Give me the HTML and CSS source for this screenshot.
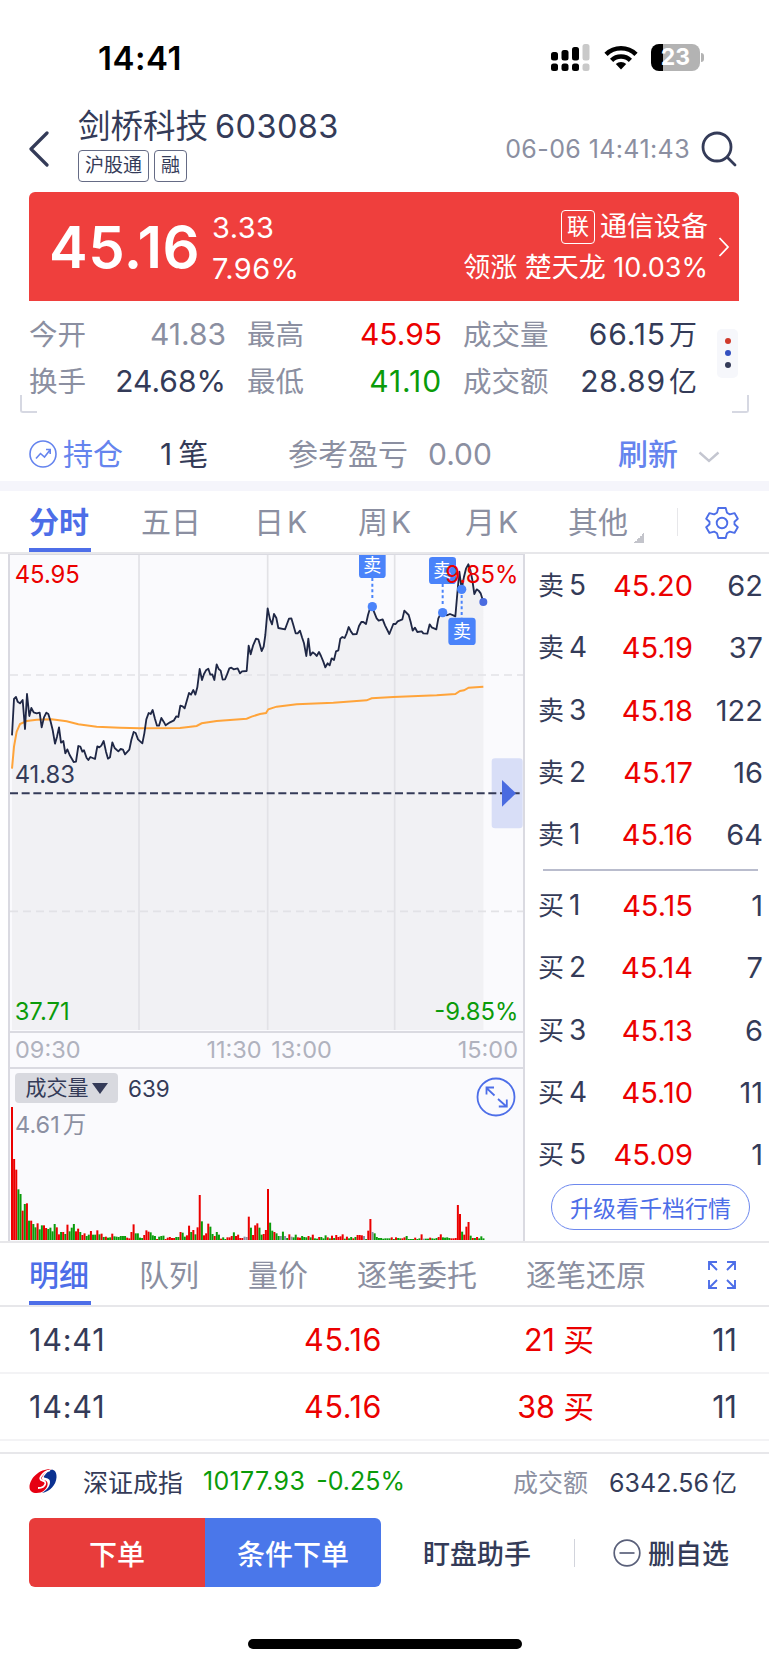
FILE: index.html
```html
<!DOCTYPE html>
<html lang="zh-CN">
<head>
    <meta charset="UTF-8">
    <meta name="viewport" content="width=device-width, initial-scale=1.0">
    <title>剑桥科技 603083</title>
    <link rel="stylesheet" href="styles.css">
</head>
<body>
    <div class="status-bar">
        <div class="status-time">14:41</div>
        <svg class="status-signal" width="39" height="28" viewBox="0 0 39 28">
            <g fill="#000">
                <rect x="0" y="8" width="7" height="8.500" rx="2.500"/>
                <rect x="10.500" y="6" width="7" height="10.500" rx="2.500"/>
                <rect x="21" y="3" width="7" height="13.500" rx="2.500"/>
                <rect x="0" y="19.500" width="7" height="7.500" rx="2.500"/>
                <rect x="10.500" y="19.500" width="7" height="7.500" rx="2.500"/>
                <rect x="21" y="19.500" width="7" height="7.500" rx="2.500"/>
            </g>
            <g fill="#c9c9c9">
                <rect x="31.500" y="0" width="7" height="16.500" rx="2.500"/>
                <rect x="31.500" y="19.500" width="7" height="7.500" rx="2.500"/>
            </g>
        </svg>
        <svg class="status-wifi" width="34" height="25" viewBox="0 0 34 25">
            <g fill="none" stroke="#000" stroke-width="4.600">
                <path d="M2 9.300a21.500 21.500 0 0 1 30 0"/>
                <path d="M7.600 15.300a13.500 13.500 0 0 1 18.800 0"/>
            </g>
            <path d="M17 24.500l-5.200-5.400a7.500 7.500 0 0 1 10.400 0z" fill="#000"/>
        </svg>
        <div class="battery"><span>23</span></div>
        <div class="battery-tip"></div>
    </div>

    <div class="header">
        <svg class="back" width="20" height="36" viewBox="0 0 20 36"><path d="M18 2L2 18l16 16" fill="none" stroke="#343b58" stroke-width="3.200" stroke-linecap="round" stroke-linejoin="round"/></svg>
        <div class="stock">
            <div class="stock-name">剑桥科技<span>603083</span></div>
            <div class="stock-tags"><span class="tag">沪股通</span><span class="tag">融</span></div>
        </div>
        <div class="header-time">06-06 14:41:43</div>
        <svg width="36" height="36" viewBox="0 0 36 36"><g fill="none" stroke="#343b58" stroke-width="2.800" stroke-linecap="round"><circle cx="16" cy="16" r="14"/><path d="M26.500 26.500L34 34"/></g></svg>
    </div>

    <div class="quote">
        <div class="quote-price">45.16</div>
        <div class="quote-change">
            <div>3.33</div>
            <div>7.96%</div>
        </div>
        <div class="quote-sector">
            <div><span class="link-tag">联</span>通信设备</div>
            <div>领涨 楚天龙 10.03%</div>
        </div>
        <svg width="12" height="20" viewBox="0 0 12 20"><path d="M1.500 1l8.500 9-8.500 9" fill="none" stroke="#fff" stroke-width="1.800"/></svg>
    </div>

    <div class="stats">
        <div class="stats-grid">
            <div class="stat"><span>今开</span><b class="muted">41.83</b></div>
            <div class="stat"><span>最高</span><b class="up">45.95</b></div>
            <div class="stat"><span>成交量</span><b class="wide">66.15<i>万</i></b></div>
            <div class="stat"><span>换手</span><b>24.68%</b></div>
            <div class="stat"><span>最低</span><b class="down wide">41.10</b></div>
            <div class="stat"><span>成交额</span><b class="wide">28.89<i>亿</i></b></div>
        </div>
        <div class="more"><i class="dot-red"></i><i class="dot-blue"></i><i class="dot-dark"></i></div>
    </div>
    <div class="brackets"><i></i><i></i></div>

    <div class="position">
        <svg width="28" height="28" viewBox="0 0 28 28"><g fill="none" stroke="#6584ee" stroke-width="1.600"><circle cx="14" cy="14" r="13"/><path d="M7 18.500l4.500-5 4 3.500 5.500-7M17 9.500h4.200v4.500"/></g></svg>
        <span class="position-label">持仓</span>
        <span class="position-count"><i>1</i>笔</span>
        <span class="position-profit">参考盈亏</span>
        <span class="position-value">0.00</span>
        <span class="refresh">刷新</span>
        <svg class="chevron" width="22" height="12" viewBox="0 0 22 12"><path d="M1.500 1.500L11 10l9.500-8.500" fill="none" stroke="#c4c6d0" stroke-width="2.400"/></svg>
    </div>

    <div class="tabs period-tabs">
        <div class="tab active">分时</div>
        <div class="tab">五日</div>
        <div class="tab">日<span>K</span></div>
        <div class="tab">周<span>K</span></div>
        <div class="tab">月<span>K</span></div>
        <div class="tab other">其他</div>
        <div class="tab-divider"></div>
        <svg class="gear" width="34" height="34" viewBox="0 0 34 34">
            <g fill="none" stroke="#4d6ee8" stroke-width="1.900" stroke-linejoin="round">
                <path d="M13.300 2h7.400l1.300 4.800 2.800 1.600 4.700-1.300 3.300 5.700-3.300 3v2.400l3.300 3-3.300 5.700-4.700-1.300-2.800 1.600-1.300 4.800h-7.400L12 27.200l-2.800-1.600-4.700 1.300-3.300-5.700 3.300-3v-2.400l-3.300-3 3.300-5.700 4.700 1.300L12 6.800z"/>
                <circle cx="17" cy="17" r="5.300"/>
            </g>
        </svg>
    </div>

    <div class="market">
        <div class="charts">
            <!-- chart units are thirds of a pixel -->
            <svg class="price-chart" width="513" height="476" viewBox="30 15 1539 1428">
                <path class="area" d=""/>
                <path class="grid" d="M417 13V1440M803 13V1440M1184 13V1440"/>
                <path class="grid dashed" d="M30 375H1569M30 1084H1569"/>
                <rect x="1475" y="625" width="93" height="210" rx="10" fill="#d8def7"/>
                <path class="mid" d="M30 730H1566"/>
                <path d="M1506 690l42 40-42 40z" fill="#4a6be0"/>
                <polyline class="average" points="36,656 42,590 50,545 60,522 80,513 110,509 155,508 200,514 235,523 290,530 360,533 420,535 540,534 590,528 605,520 650,513 740,506 755,500 780,492 798,489 805,478 830,470 890,463 1000,458 1100,451 1115,445 1180,441 1310,436 1366,432 1380,423 1392,421 1406,413 1450,410"/>
                <polyline class="price" points="36,556 42,447 48,441 53,455 60,460 68,450 75,537 81,432 88,498 94,474 101,487 110,490 119,488 125,532 132,502 139,488 145,492 152,515 158,540 165,581 171,560 177,532 183,578 190,573 196,610 202,598 209,615 221,636 228,635 235,588 241,590 247,605 252,601 260,624 265,630 271,621 285,627 292,589 298,592 304,587 311,573 318,605 324,626 330,622 337,577 344,594 355,604 362,597 369,599 375,613 388,599 394,570 401,546 407,549 414,568 427,580 433,550 439,508 446,489 452,492 458,480 465,507 471,527 477,527 484,504 491,515 497,526 510,517 522,511 529,499 535,501 541,467 548,469 554,475 567,429 573,434 580,420 586,434 592,412 599,357 606,390 612,372 618,361 625,356 631,374 637,373 643,390 650,343 656,357 662,362 668,389 675,388 681,374 688,355 694,353 701,358 713,355 720,370 726,364 740,363 746,287 752,313 759,287 768,266 775,268 780,285 785,303 791,290 796,255 803,175 810,208 816,223 822,192 829,204 835,234 855,238 861,222 867,206 874,205 880,225 887,250 893,250 900,242 906,262 912,280 919,318 925,266 931,316 938,307 944,311 950,318 957,306 963,318 970,335 976,352 983,340 989,346 995,325 1002,330 1008,304 1015,301 1021,266 1027,261 1034,264 1040,250 1046,231 1053,245 1059,253 1070,252 1077,228 1084,216 1090,216 1098,222 1104,195 1110,175 1117,170 1123,188 1130,205 1136,212 1148,208 1155,226 1168,252 1174,237 1180,222 1187,222 1193,214 1207,208 1213,182 1226,195 1232,216 1238,242 1245,233 1252,246 1265,244 1270,250 1282,251 1289,223 1295,232 1309,238 1315,205 1321,193 1328,188 1340,196 1350,192 1360,196 1366,199 1372,130 1378,65 1385,118 1392,80 1398,56 1405,43 1411,60 1417,90 1423,132 1430,118 1436,122 1442,130 1450,156"/>
                <circle cx="1450" cy="156" r="12" fill="#4a6be0"/>
                <g class="marker">
                    <path d="M1117 84v60M1328 102v60M1385 135v70"/>
                    <circle cx="1117" cy="170" r="14"/>
                    <circle cx="1328" cy="188" r="14"/>
                    <circle cx="1385" cy="118" r="14"/>
                    <rect x="1077" y="3" width="80" height="81" rx="10"/>
                    <rect x="1287" y="21" width="81" height="81" rx="10"/>
                    <rect x="1345" y="203" width="82" height="82" rx="10"/>
                    <text x="1117" y="65">卖</text>
                    <text x="1327" y="82">卖</text>
                    <text x="1386" y="264">卖</text>
                </g>
                <text class="up" x="44" y="100">45.95</text>
                <text class="up" x="1555" y="100" text-anchor="end">9.85%</text>
                <text x="44" y="700">41.83</text>
                <text class="down" x="44" y="1411">37.71</text>
                <text class="down" x="1555" y="1411" text-anchor="end">-9.85%</text>
            </svg>
            <div class="time-axis"><span>09:30</span><span>11:30 13:00</span><span>15:00</span></div>
            <div class="volume">
                <div class="volume-head">
                    <div class="volume-select">成交量<i></i></div>
                    <div>639</div>
                </div>
                <div class="volume-max">4.61<i>万</i></div>
                <svg class="volume-expand" width="40" height="40" viewBox="0 0 40 40"><g fill="none" stroke="#4d6ee8" stroke-width="1.800"><circle cx="20" cy="20" r="18.500"/><path d="M18.500 18.500L10.500 11M10.500 17.500V10.500H18M22 22l8.500 7.500M30.800 22.500v7h-8"/></g></svg>
                <svg class="volume-bars" width="513" height="134" viewBox="30 291 1539 402"></svg>
            </div>
        </div>
        <div class="book">
            <div class="level"><span>卖<em>5</em></span><b>45.20</b><i>62</i></div>
            <div class="level"><span>卖<em>4</em></span><b>45.19</b><i>37</i></div>
            <div class="level"><span>卖<em>3</em></span><b>45.18</b><i>122</i></div>
            <div class="level"><span>卖<em>2</em></span><b>45.17</b><i>16</i></div>
            <div class="level"><span>卖<em>1</em></span><b>45.16</b><i>64</i></div>
            <div class="book-divider"></div>
            <div class="level"><span>买<em>1</em></span><b>45.15</b><i>1</i></div>
            <div class="level"><span>买<em>2</em></span><b>45.14</b><i>7</i></div>
            <div class="level"><span>买<em>3</em></span><b>45.13</b><i>6</i></div>
            <div class="level"><span>买<em>4</em></span><b>45.10</b><i>11</i></div>
            <div class="level"><span>买<em>5</em></span><b>45.09</b><i>1</i></div>
            <button class="upgrade">升级看千档行情</button>
        </div>
    </div>

    <div class="tabs detail-tabs">
        <div class="tab active">明细</div>
        <div class="tab">队列</div>
        <div class="tab">量价</div>
        <div class="tab">逐笔委托</div>
        <div class="tab">逐笔还原</div>
        <svg class="fullscreen" width="28" height="28" viewBox="0 0 28 28"><path d="M1 9V1h8M1 1l8 8M19 1h8v8M27 1l-8 8M1 19v8h8M1 27l8-8M19 27h8v-8M27 27l-8-8" fill="none" stroke="#4d6ee8" stroke-width="1.900"/></svg>
    </div>
    <div class="trade"><span>14:41</span><span>45.16</span><span>21 买</span><span>11</span></div>
    <div class="trade"><span>14:41</span><span>45.16</span><span>38 买</span><span>11</span></div>

    <div class="index-bar">
        <svg width="28" height="26" viewBox="0 0 28 26">
            <path d="M22 1C10 1 1 10 .500 19c0 4 3 6 7 6 6 0 10-3.500 11-8 .600-3-1-4.500-4-5-2-.500-2.500-1.500-1-3.500C15.500 5 18.500 2.500 22 1z" fill="#e60012"/>
            <path d="M23 1.500c3.500.800 4.800 4 4.500 8C27 17 21 23.500 13 25c5-3 8-7 8-11 0-3-2.500-3.800-5-4.200-1.500-.300-1.500-1-.500-2.300C17.500 4.500 20 2.500 23 1.500z" fill="#0b3190"/>
            <path d="M9 20c4 0 6.500-1.500 7.200-4 .500-2-.700-3-2.800-3.500-2.700-.600-2.700-2.700-1-4.800C14.500 4.800 18 2.700 21 2.400" fill="none" stroke="#fff" stroke-width="1.800"/>
        </svg>
        <span class="index-name">深证成指</span>
        <span class="index-value down">10177.93</span>
        <span class="index-change down">-0.25%</span>
        <span class="index-label">成交额</span>
        <span class="index-amount">6342.56<i>亿</i></span>
    </div>

    <div class="actions">
        <button class="order">下单</button>
        <button class="condition">条件下单</button>
        <div class="assistant">盯盘助手</div>
        <div class="actions-divider"></div>
        <svg width="28" height="28" viewBox="0 0 28 28"><g fill="none" stroke="#5a607a" stroke-width="1.700"><circle cx="14" cy="14" r="12.800"/><path d="M6.500 14h15"/></g></svg>
        <div class="remove">删自选</div>
    </div>
    <div class="home-indicator"></div>

    <script src="script.js"></script>
</body>
</html>
```
FILE: styles.css
```css
body {
    font-family: Inter, 'Noto Sans CJK SC', sans-serif;
    margin: 0;
    padding: 0;
    background-color: #fff;
    color: #343b58;
    width: 769px;
    height: 1665px;
    overflow: hidden;
    white-space: nowrap;
}

svg {
    display: block;
    flex: none;
}

b, i, em {
    font-weight: 400;
    font-style: normal;
}

button {
    font-family: inherit;
    border: none;
    padding: 0;
}

.up { color: #eb0000; fill: #eb0000; }
.down { color: #0a9b0a; fill: #0a9b0a; }
.muted { color: #8b8fa1; }

.status-bar {
    display: flex;
    align-items: center;
    height: 115px;
    box-sizing: border-box;
    padding-left: 98px;
}

.status-time {
    width: 453px;
    font-size: 33px;
    letter-spacing: 0.5px;
    font-weight: 600;
    color: #000;
}

.status-wifi {
    margin-left: 14px;
}

.battery {
    width: 49px;
    height: 27px;
    margin-left: 13px;
    border-radius: 8px;
    background: linear-gradient(90deg, #000 12px, #b3b3b3 12px);
    color: #fff;
    font-size: 23px;
    font-weight: 700;
    line-height: 27px;
    text-align: center;
}

.battery-tip {
    width: 3px;
    height: 9px;
    margin-left: 1px;
    border-radius: 0 4px 4px 0;
    background-color: #b3b3b3;
}

.header {
    display: flex;
    align-items: center;
    height: 67px;
    margin-bottom: 10px;
    padding: 0 32px 0 29px;
}

.stock {
    flex: 1;
    margin-left: 29px;
    padding-top: 1px;
}

.stock-name {
    font-size: 32.5px;
    line-height: 36px;
    height: 33px;
    margin-top: -8px;
}

.stock-name span {
    margin-left: 7px;
    letter-spacing: 0.4px;
}

.stock-tags {
    display: flex;
    gap: 5px;
    margin-top: 8px;
}

.tag {
    height: 30px;
    line-height: 29px;
    padding: 0 6px;
    border: 1px solid #656b85;
    border-radius: 4px;
    font-size: 19px;
}

.header-time {
    margin-right: 11px;
    font-size: 25px;
    letter-spacing: 0.4px;
    color: #8b8fa1;
}

.quote {
    display: flex;
    align-items: center;
    height: 109px;
    margin: 0 30px 0 29px;
    padding: 0 9px 0 20px;
    box-sizing: border-box;
    border-radius: 6px 6px 0 0;
    background-color: #ef3f3d;
    color: #fff;
}

.quote-price {
    width: 163px;
    font-size: 58px;
    letter-spacing: 0.5px;
    font-weight: 600;
}

.quote-change {
    flex: 1;
    padding-top: 2px;
    font-size: 29px;
    letter-spacing: 0.4px;
    line-height: 41px;
}

.quote-sector {
    margin-right: 10px;
    padding-top: 1px;
    font-size: 27px;
    line-height: 41px;
    text-align: right;
}

.link-tag {
    display: inline-block;
    width: 32px;
    height: 32px;
    margin-right: 5px;
    border: 1px solid #fff;
    border-radius: 4px;
    font-size: 22px;
    line-height: 31px;
    text-align: center;
    vertical-align: 2px;
}

.quote-sector div {
    height: 41px;
}

.stats {
    display: flex;
    align-items: center;
    height: 94px;
    padding: 10px 31px 0 29px;
    justify-content: space-between;
}

.stats-grid {
    display: grid;
    grid-template-columns: 197px 195px 234px;
    column-gap: 21px;
    line-height: 47px;
}

.stat {
    display: flex;
    justify-content: space-between;
    font-size: 28.5px;
    height: 47px;
}

.stat span {
    color: #8b8fa1;
}

.stat b {
    font-size: 30px;
}

.stat .wide {
    letter-spacing: 0.9px;
}

.stat i {
    font-size: 28px;
    letter-spacing: 0;
    margin-left: 3px;
}

.more {
    display: flex;
    flex-direction: column;
    justify-content: center;
    align-items: center;
    gap: 6px;
    width: 21px;
    height: 49px;
    margin-bottom: 10px;
    border-radius: 5px;
    background-color: #f6f7fb;
}

.more i {
    width: 6px;
    height: 6px;
    border-radius: 50%;
}

.dot-red { background-color: #d03a2b; }
.dot-blue { background-color: #3350c0; }
.dot-dark { background-color: #343b58; }

.brackets {
    display: flex;
    justify-content: space-between;
    height: 18px;
    margin: -10px 20px 0;
}

.brackets i {
    width: 15px;
    height: 16px;
    border: solid #d6d8e2;
    border-width: 0 0 2px 2px;
    border-radius: 0 0 0 3px;
}

.brackets i:last-child {
    border-width: 0 2px 2px 0;
    border-radius: 0 0 3px 0;
}

.position {
    display: flex;
    align-items: center;
    height: 68px;
    padding: 14px 0 0 29px;
    box-sizing: border-box;
    font-size: 30px;
    line-height: 40px;
}

.position span {
    box-sizing: border-box;
}

.position-label {
    width: 98px;
    padding-left: 6px;
    color: #6584ee;
}

.position-count { width: 133px; padding-left: 5px; }
.position-count i { margin-right: 6px; }
.position-profit { width: 140px; color: #8b8fa1; }
.position-value { width: 190px; color: #8b8fa1; }
.refresh { width: 80px; color: #6584ee; font-weight: 500; }

.chevron {
    margin-top: 5px;
}

.tabs {
    display: flex;
    padding-left: 29px;
    font-size: 30px;
    line-height: 62px;
    color: #8b8fa1;
    border-bottom: 2px solid #e7e7ea;
}

.tab {
    box-sizing: border-box;
}

.tab.active {
    color: #4d6ee8;
    font-weight: 500;
    border-bottom: 4px solid #4d6ee8;
}

.tab span {
    margin-left: 3px;
}

.period-tabs {
    height: 61px;
    border-top: 10px solid #f5f5fb;
}

.period-tabs .tab { margin-right: 50px; }
.period-tabs .tab.active { font-weight: 700; width: 62px; }
.period-tabs .tab:nth-child(2) { width: 63px; }
.period-tabs .tab:nth-child(3) { width: 54px; }
.period-tabs .tab:nth-child(4) { width: 57px; }
.period-tabs .tab:nth-child(5) { width: 53px; }

.period-tabs .tab.other {
    display: flex;
    margin-right: 0;
}

.other::after {
    content: '';
    width: 10px;
    height: 10px;
    margin: 42px 0 0 6px;
    background: linear-gradient(135deg, transparent 50%, #c3c4cb 50%);
}

.tab-divider {
    width: 1px;
    height: 28px;
    margin: 17px 27px 0 33px;
    background-color: #e7e7ea;
}

.gear {
    margin-top: 15px;
}

.market {
    display: flex;
    height: 687px;
    border-bottom: 2px solid #e7e7ea;
}

.charts {
    width: 513px;
    margin-left: 8px;
    border: 2px solid #dadae1;
    border-width: 1px 2px 0 2px;
    background-color: #fafafd;
}

.price-chart {
    font-size: 71.5px;
    fill: #343b58;
}

.price-chart .area { fill: #f1f1f4; }
.price-chart .grid { fill: none; stroke: #e2e2e6; stroke-width: 5; }
.price-chart .dashed { stroke-dasharray: 24 15; }
.price-chart .mid { stroke: #343b58; stroke-width: 6; stroke-dasharray: 24 11; }
.price-chart .average { fill: none; stroke: #ffa43a; stroke-width: 6; }
.price-chart .price { fill: none; stroke: #1f2745; stroke-width: 5.5; stroke-linejoin: round; }
.marker { fill: #4a83fa; }
.marker path { stroke: #4a83fa; stroke-width: 6; stroke-dasharray: 9 8; }
.marker text { fill: #fff; font-size: 54px; text-anchor: middle; }

.time-axis {
    display: flex;
    justify-content: space-between;
    height: 34px;
    padding: 0 5px;
    border-top: 2px solid #dadae1;
    border-bottom: 2px solid #dadae1;
    font-size: 23.5px;
    line-height: 34px;
    word-spacing: 3px;
    color: #b0b2be;
}

.volume {
    position: relative;
    height: 172px;
    font-size: 22.5px;
}

.volume-head {
    display: flex;
    align-items: center;
    gap: 10px;
    padding: 4px 0 0 5px;
}

.volume-select {
    display: flex;
    align-items: center;
    justify-content: center;
    width: 103px;
    height: 30px;
    border-radius: 4px;
    background-color: #d8d9df;
    font-size: 21px;
    line-height: 28px;
}

.volume-select i {
    border: 8px solid transparent;
    border-top: 11px solid #343b58;
    border-bottom: 0;
    margin-left: 3px;
}

.volume-max {
    margin: 8px 0 0 5px;
    font-size: 23.5px;
    line-height: 28px;
    color: #8b8fa1;
}

.volume-max i {
    margin-left: 3px;
}

.volume-expand {
    position: absolute;
    right: 7px;
    top: 8px;
}

.volume-bars {
    position: absolute;
    left: 0;
    bottom: 0;
}

.book {
    flex: 1;
    padding: 0 6px 0 13px;
}

.level {
    display: flex;
    height: 62.3px;
    line-height: 63px;
    font-size: 29px;
}

.level span {
    width: 52px;
    font-size: 26px;
}

.level em {
    margin-left: 5px;
    font-size: 28px;
}

.level b {
    width: 103px;
    text-align: right;
    color: #eb0000;
}

.level i {
    flex: 1;
    text-align: right;
}

.book-divider {
    height: 1.5px;
    margin: 4px 5px 3px;
    background-color: #b9bccd;
}

.upgrade {
    display: block;
    width: 199px;
    height: 46px;
    margin: -1px 0 0 13px;
    border: 1.5px solid #6d88ee;
    border-radius: 23px;
    background: none;
    color: #4d6ee8;
    font-size: 23px;
}

.detail-tabs {
    height: 62px;
    gap: 49px;
    line-height: 64px;
}

.detail-tabs .tab.active {
    width: 62px;
    margin-right: -1px;
}

.fullscreen {
    margin: 18px 0 0 13px;
}

.trade {
    display: grid;
    grid-template-columns: 150px 203px 212px 143px;
    height: 65px;
    line-height: 66px;
    padding-left: 29px;
    border-bottom: 2px solid #f3f3f5;
    font-size: 30.5px;
    text-align: right;
}

.trade span:first-child { text-align: left; letter-spacing: 0.8px; }
.trade span:nth-child(2), .trade span:nth-child(3) { color: #eb0000; }
.trade span:nth-child(2) { letter-spacing: 0.6px; }

.index-bar {
    display: flex;
    align-items: center;
    height: 54px;
    margin-top: 11px;
    padding: 0 32px 0 29px;
    border-top: 2px solid #e7e7ea;
    font-size: 25px;
}

.index-name { width: 120px; margin-left: 26px; }
.index-value { letter-spacing: 0.3px; }
.index-change { flex: 1; margin-left: 11px; }
.index-label { margin-right: 21px; color: #8b8fa1; }
.index-amount i { margin-left: 3px; }

.actions {
    display: flex;
    align-items: center;
    height: 69px;
    margin-top: 10px;
    padding-left: 29px;
    font-size: 27px;
    font-weight: 500;
}

.order, .condition {
    width: 176px;
    height: 69px;
    font-size: 28px;
    font-weight: 500;
    color: #fff;
}

.order { border-radius: 6px 0 0 6px; background-color: #e83c3b; }
.condition { border-radius: 0 6px 6px 0; background-color: #4a77ea; }
.assistant { width: 151px; margin-left: 42px; }
.actions-divider { width: 1px; height: 28px; margin-right: 38px; background-color: #d2d4dc; }
.remove { margin-left: 7px; }

.home-indicator {
    width: 274px;
    height: 10px;
    margin: 52px auto 0;
    border-radius: 5px;
    background-color: #000;
}
```
FILE: script.js
```js
// volume per minute: r = up, g = down, x = flat
const volume = 'r400 r243 r211 g152 g138 r88 g108 r110 g58 r58 g48 g38 r50 g32 g44 r44 r36 g33 g37 g26 ' +
    'g48 r38 r17 g24 r24 g18 r46 g26 g37 g48 r26 r34 g24 r15 r20 g12 g16 r27 g16 g16 ' +
    'r29 g17 r19 g9 r10 g7 g8 r19 g11 g10 g9 g12 g12 g12 r7 r5 r24 r47 g20 g20 ' +
    'g7 g6 r15 r29 r25 g23 g14 g12 r3 g10 g12 g13 r3 r7 r9 r6 r6 g9 g9 r24 ' +
    'g22 g10 r14 r43 g24 r30 g17 r38 r135 g56 r14 r20 r49 g40 g18 r12 g24 g16 r4 g8 ' +
    'g3 r8 r8 r12 g23 r12 r16 r6 r6 x10 x9 r70 g37 r15 r44 r50 g37 g16 r18 r30 ' +
    'r153 g52 g28 r24 g20 g12 x12 g25 x12 g6 r17 x10 g8 g16 r8 r7 g12 g9 g8 r12 ' +
    'g8 r16 g5 g4 r9 g9 g5 g14 r8 g5 r13 g6 r15 r9 r11 r17 g4 r10 g5 g9 ' +
    'r5 g9 r15 r15 r14 x12 g3 r28 r63 x24 g20 g9 g6 g6 g4 g5 g5 g5 r8 g3 ' +
    'r8 g6 g5 r5 r8 g12 g3 g3 g3 r7 g3 g5 r17 x4 g4 g4 r7 g5 g4 g6 ' +
    'r9 r17 g8 g7 g8 g6 r5 r5 r6 r105 r78 g25 r16 r40 r54 g13 r6 g6 r9 g5 g11 g5';
const colors = { r: '#eb0000', g: '#0a9b0a', x: '#8b8fa1' };

document.querySelector('.volume-bars').innerHTML = volume.split(' ').map((v, i) => {
    const h = +v.slice(1);
    return `<rect x="${(33 + i * 6.4).toFixed(1)}" y="${690 - h}" width="6" height="${h}" fill="${colors[v[0]]}"/>`;
}).join('');

// shade everything under the price line
const points = document.querySelector('.price').getAttribute('points');
document.querySelector('.area').setAttribute('d', `M36 1440L${points}V1440Z`);
```
